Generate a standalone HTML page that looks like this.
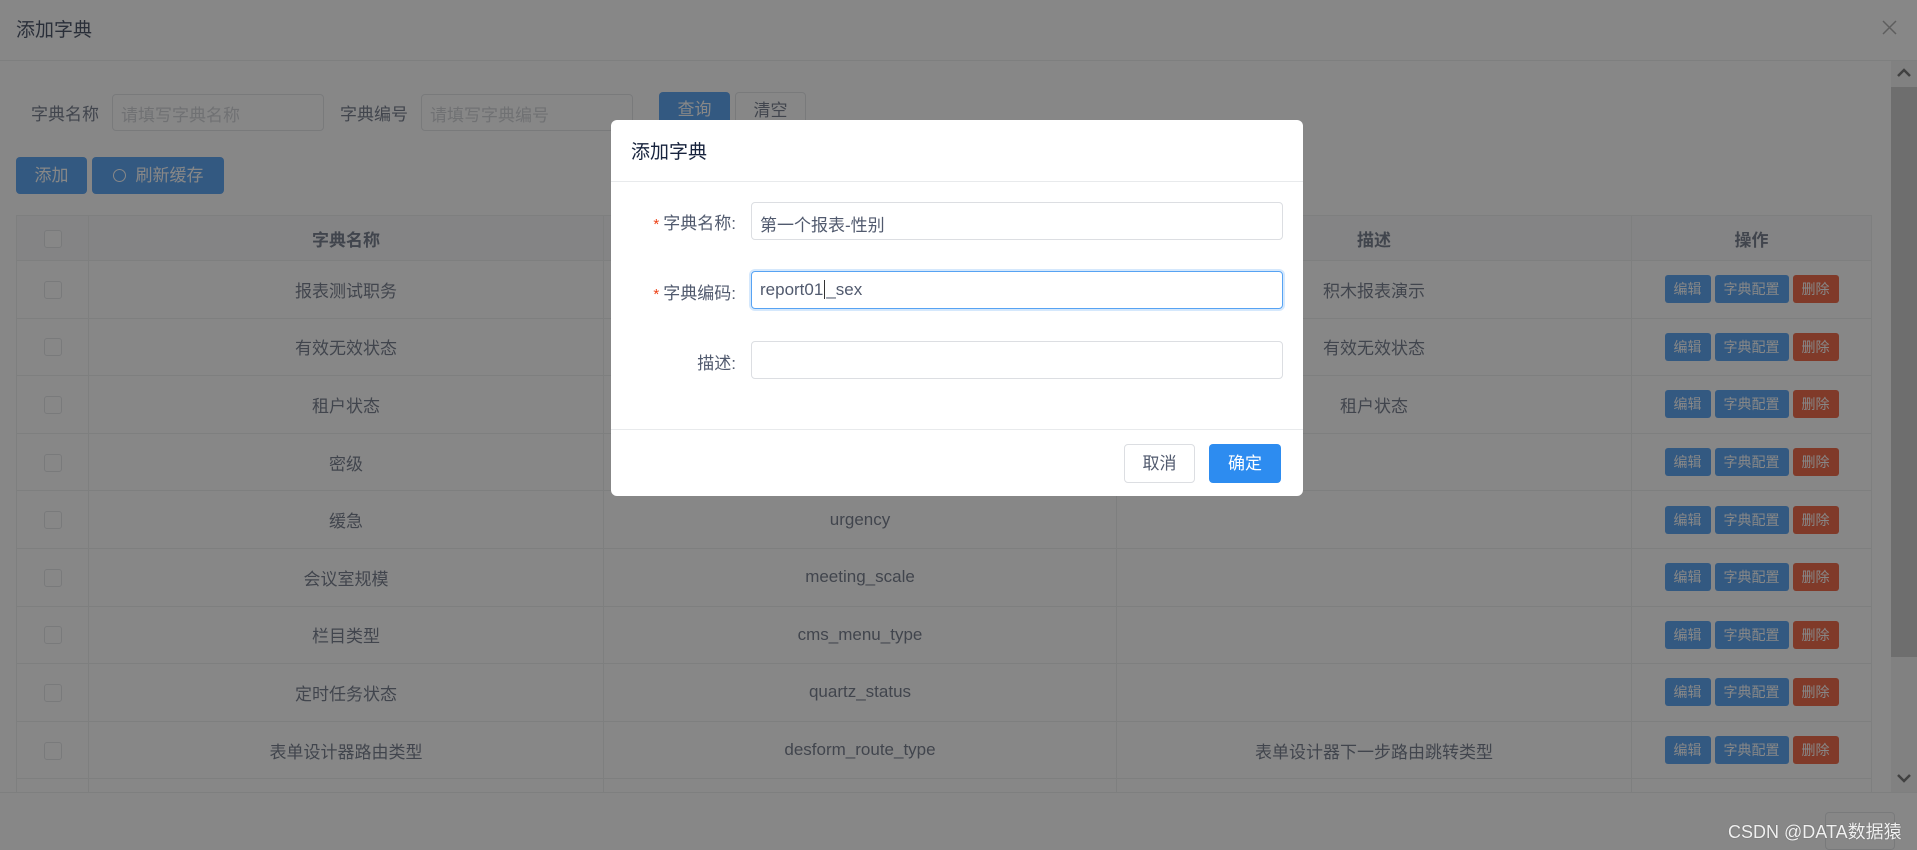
<!DOCTYPE html>
<html><head><meta charset="utf-8"><style>
*{box-sizing:border-box;margin:0;padding:0}
body{width:1917px;height:850px;overflow:hidden;background:#fff;font-family:"Liberation Sans","Noto Sans CJK SC",sans-serif;color:#515a6e;position:relative}
.abs{position:absolute}
.hdr{left:0;top:0;width:1917px;height:61px;border-bottom:1px solid #e8eaec}
.title{left:16px;top:15px;font-size:19px;color:#17233d}
.lbl{font-size:17px;color:#515a6e}
.inp{border:1px solid #dcdee2;border-radius:4px;background:#fff;font-size:17px;color:#c5c8ce;padding:6px 8px}
.btn{border-radius:4px;font-size:17px;text-align:center;color:#fff}
table{border-collapse:collapse;position:absolute;left:16px;top:215px;width:1855px;font-size:17px;color:#515a6e;table-layout:fixed;z-index:1}
td,th{border:1px solid #e8eaec;text-align:center;height:57.6px;font-weight:normal;vertical-align:middle}
th{background:#f8f8f9;height:45px;font-weight:bold;color:#515a6e}
.cb{display:inline-block;width:18px;height:18px;border:1px solid #dcdee2;border-radius:3px;background:#fff;vertical-align:middle}
.ob{display:inline-block;height:28px;line-height:28px;font-size:14px;color:#fff;border-radius:3px;padding:0 9px;margin:0 2px;background:#2d8cf0}
.ob.r{background:#ed4014}
.mask{left:0;top:0;width:1917px;height:850px;background:rgba(55,55,55,0.6);z-index:10}
.modal{left:611px;top:120px;width:692px;height:376px;background:#fff;border-radius:6px;z-index:11}
.fl{font-size:17px;color:#515a6e;text-align:right;width:125px;position:absolute;left:0}
.fl b{color:#ed4014;font-weight:normal;font-size:15px;margin-right:4px}
.fi{position:absolute;left:140px;width:532px;height:38px;border:1px solid #dcdee2;border-radius:4px;font-size:17px;color:#515a6e;padding:8px 8px}
</style></head><body>
<div class="abs hdr"></div>
<div class="abs title">添加字典</div>
<svg class="abs" style="left:1882px;top:20px" width="15" height="15"><path d="M1 1L14 14M14 1L1 14" stroke="#999" stroke-width="1.5"/></svg>

<div class="abs lbl" style="left:31px;top:100px">字典名称</div>
<div class="abs inp" style="left:112px;top:94px;width:212px;height:37px">请填写字典名称</div>
<div class="abs lbl" style="left:340px;top:100px">字典编号</div>
<div class="abs inp" style="left:421px;top:94px;width:212px;height:37px">请填写字典编号</div>
<div class="abs btn" style="left:659px;top:92px;width:71px;height:36px;line-height:36px;background:#2d8cf0">查询</div>
<div class="abs btn" style="left:735px;top:92px;width:71px;height:36px;line-height:36px;border:1px solid #dcdee2;color:#515a6e;background:#fff">清空</div>
<div class="abs btn" style="left:16px;top:157px;width:71px;height:37px;line-height:37px;background:#2d8cf0">添加</div>
<div class="abs btn" style="left:92px;top:157px;width:132px;height:37px;line-height:37px;background:#2d8cf0"><span style="display:inline-block;width:13px;height:13px;border:1.5px solid #fff;border-radius:50%;vertical-align:-1px;margin-right:10px"></span>刷新缓存</div>

<table>
<colgroup><col style="width:72px"><col style="width:515px"><col style="width:513px"><col style="width:515px"><col style="width:240px"></colgroup>
<tr><th><span class="cb"></span></th><th>字典名称</th><th>字典编号</th><th>描述</th><th>操作</th></tr>
<tr><td><span class="cb"></span></td><td>报表测试职务</td><td>report_job</td><td>积木报表演示</td><td><span class="ob">编辑</span><span class="ob">字典配置</span><span class="ob r">删除</span></td></tr>
<tr><td><span class="cb"></span></td><td>有效无效状态</td><td>valid_status</td><td>有效无效状态</td><td><span class="ob">编辑</span><span class="ob">字典配置</span><span class="ob r">删除</span></td></tr>
<tr><td><span class="cb"></span></td><td>租户状态</td><td>tenant_status</td><td>租户状态</td><td><span class="ob">编辑</span><span class="ob">字典配置</span><span class="ob r">删除</span></td></tr>
<tr><td><span class="cb"></span></td><td>密级</td><td>secret_level</td><td></td><td><span class="ob">编辑</span><span class="ob">字典配置</span><span class="ob r">删除</span></td></tr>
<tr><td><span class="cb"></span></td><td>缓急</td><td>urgency</td><td></td><td><span class="ob">编辑</span><span class="ob">字典配置</span><span class="ob r">删除</span></td></tr>
<tr><td><span class="cb"></span></td><td>会议室规模</td><td>meeting_scale</td><td></td><td><span class="ob">编辑</span><span class="ob">字典配置</span><span class="ob r">删除</span></td></tr>
<tr><td><span class="cb"></span></td><td>栏目类型</td><td>cms_menu_type</td><td></td><td><span class="ob">编辑</span><span class="ob">字典配置</span><span class="ob r">删除</span></td></tr>
<tr><td><span class="cb"></span></td><td>定时任务状态</td><td>quartz_status</td><td></td><td><span class="ob">编辑</span><span class="ob">字典配置</span><span class="ob r">删除</span></td></tr>
<tr><td><span class="cb"></span></td><td>表单设计器路由类型</td><td>desform_route_type</td><td>表单设计器下一步路由跳转类型</td><td><span class="ob">编辑</span><span class="ob">字典配置</span><span class="ob r">删除</span></td></tr>
<tr><td></td><td></td><td></td><td></td><td></td></tr>
</table>
<div class="abs" style="left:0;top:792px;width:1917px;height:58px;background:#fff;border-top:1px solid #e8eaec;z-index:2"></div>
<div class="abs" style="left:1825px;top:812px;width:70px;height:38px;border:1px solid #dcdee2;border-radius:4px;z-index:3"></div>
<div class="abs" style="left:1891px;top:61px;width:26px;height:731px;background:#f1f1f1;z-index:2"></div>
<div class="abs" style="left:1891px;top:87px;width:26px;height:570px;background:#c1c1c1;z-index:3"></div>
<svg class="abs" style="left:1897px;top:68px;z-index:3" width="14" height="10"><path d="M1 8L7 2L13 8" stroke="#505050" stroke-width="2.5" fill="none"/></svg>
<svg class="abs" style="left:1897px;top:773px;z-index:3" width="14" height="10"><path d="M1 2L7 8L13 2" stroke="#505050" stroke-width="2.5" fill="none"/></svg>

<div class="abs mask"></div>

<div class="abs modal">
  <div class="abs" style="left:20px;top:17px;font-size:19px;color:#17233d">添加字典</div>
  <div class="abs" style="left:0;top:61px;width:692px;border-top:1px solid #e8eaec"></div>
  <div class="fl" style="top:89px"><b>*</b>字典名称:</div>
  <div class="fi" style="top:82px">第一个报表-性别</div>
  <div class="fl" style="top:159px"><b>*</b>字典编码:</div>
  <div class="fi" style="top:151px;border-color:#57a3f3;box-shadow:0 0 0 2px rgba(45,140,240,.2)">report01<span style="border-left:1px solid #333;margin:0 1px"></span>_sex</div>
  <div class="fl" style="top:229px">描述:</div>
  <div class="fi" style="top:221px"></div>
  <div class="abs" style="left:0;top:309px;width:692px;border-top:1px solid #e8eaec"></div>
  <div class="abs btn" style="left:513px;top:324px;width:71px;height:39px;line-height:37px;border:1px solid #dcdee2;color:#515a6e;background:#fff">取消</div>
  <div class="abs btn" style="left:598px;top:324px;width:72px;height:39px;line-height:39px;background:#2d8cf0">确定</div>
</div>

<div class="abs" style="left:1728px;top:818px;font-size:18px;color:#f0f0f0;text-shadow:0 0 1px #555;z-index:12">CSDN @DATA数据猿</div>
</body></html>
